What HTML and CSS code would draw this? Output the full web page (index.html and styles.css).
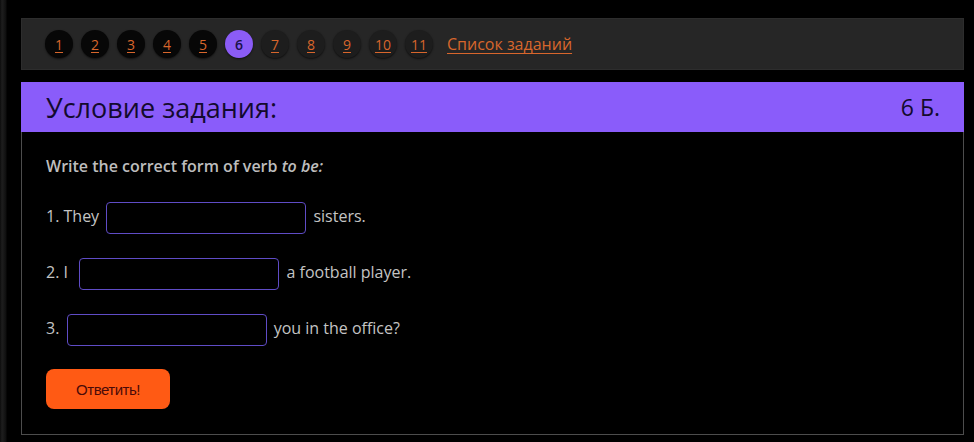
FILE: index.html
```html
<!DOCTYPE html>
<html lang="ru">
<head>
<meta charset="utf-8">
<link rel="stylesheet" href="styles.css">
</head>
<body>
<div class="wrap">
  <nav class="nav">
    <a class="num done" href="#">1</a>
    <a class="num done" href="#">2</a>
    <a class="num done" href="#">3</a>
    <a class="num done" href="#">4</a>
    <a class="num done" href="#">5</a>
    <span class="num current">6</span>
    <a class="num" href="#">7</a>
    <a class="num" href="#">8</a>
    <a class="num" href="#">9</a>
    <a class="num" href="#">10</a>
    <a class="num" href="#">11</a>
    <a class="list" href="#">Список заданий</a>
  </nav>
  <div class="head">
    <span class="title">Условие задания:</span>
    <span class="score">6 Б.</span>
  </div>
  <div class="panel">
    <p class="task">Write the correct form of verb <em>to be:</em></p>
    <div class="row">1. They <input class="field" type="text"> sisters.</div>
    <div class="row">2. I&nbsp; <input class="field" type="text"> a football player.</div>
    <div class="row">3. <input class="field" type="text"> you in the office?</div>
    <button class="btn">Ответить!</button>
  </div>
</div>
</body>
</html>
```
FILE: styles.css
```css
html, body {
  margin: 0;
  padding: 0;
}
body {
  width: 974px;
  height: 442px;
  overflow: hidden;
  background: linear-gradient(to right, #0c0c0c 0, #1e1e1e 2px, #171717 4px, #0e0e0e 6px, #000 7px);
  font-family: "Open Sans", "Liberation Sans", sans-serif;
}
.wrap {
  margin-left: 21px;
  width: 943px;
  padding-top: 18px;
}
.nav {
  height: 52px;
  box-sizing: border-box;
  background: #262626;
  border: 1px solid #2d2d2d;
  display: flex;
  align-items: center;
  gap: 8px;
  padding-left: 23px;
}
.num {
  width: 28px;
  height: 28px;
  border-radius: 50%;
  display: flex;
  align-items: center;
  justify-content: center;
  font-size: 14px;
  color: #d8662c;
  text-decoration: underline;
  text-underline-offset: 2px;
  background: #1d1d1d;
  box-shadow: 0 1px 2px rgba(0,0,0,0.6);
}
.num.done {
  background: #070707;
}
.num.current {
  background: #8b5cf6;
  color: #1a1148;
  text-decoration: none;
  font-weight: 600;
  font-size: 14px;
}
.list {
  margin-left: 6px;
  font-size: 16px;
  color: #d8662c;
  text-decoration: underline;
  text-underline-offset: 3px;
}
.head {
  margin-top: 12px;
  height: 50px;
  background: #8a5cfa;
  display: flex;
  align-items: center;
  justify-content: space-between;
  padding: 0 24px 0 25px;
  color: #130a2e;
}
.title {
  font-size: 27px;
  font-weight: 500;
}
.score {
  font-size: 23px;
  font-weight: 500;
}
.panel {
  border: 1px solid #4d4d4d;
  border-top: none;
  padding: 23px 24px 25px;
  color: #c4c4c4;
  font-size: 16px;
}
.task {
  margin: 0 0 23px;
  line-height: 22px;
  font-weight: 600;
  color: #bdbdbd;
}
.task em {
  font-style: italic;
}
.row {
  height: 32px;
  line-height: 32px;
  margin-bottom: 24px;
}
.field {
  width: 200px;
  height: 32px;
  box-sizing: border-box;
  vertical-align: middle;
  background: #000;
  border: 1px solid #5f4cc6;
  border-radius: 4px;
  margin: 0 3px;
}
.btn {
  display: block;
  margin-top: 25px;
  width: 124px;
  height: 40px;
  border: none;
  border-radius: 8px;
  background: #ff5a14;
  color: #4a0a08;
  font-family: "Liberation Sans", sans-serif;
  font-size: 15px;
  letter-spacing: -0.5px;
}
```
